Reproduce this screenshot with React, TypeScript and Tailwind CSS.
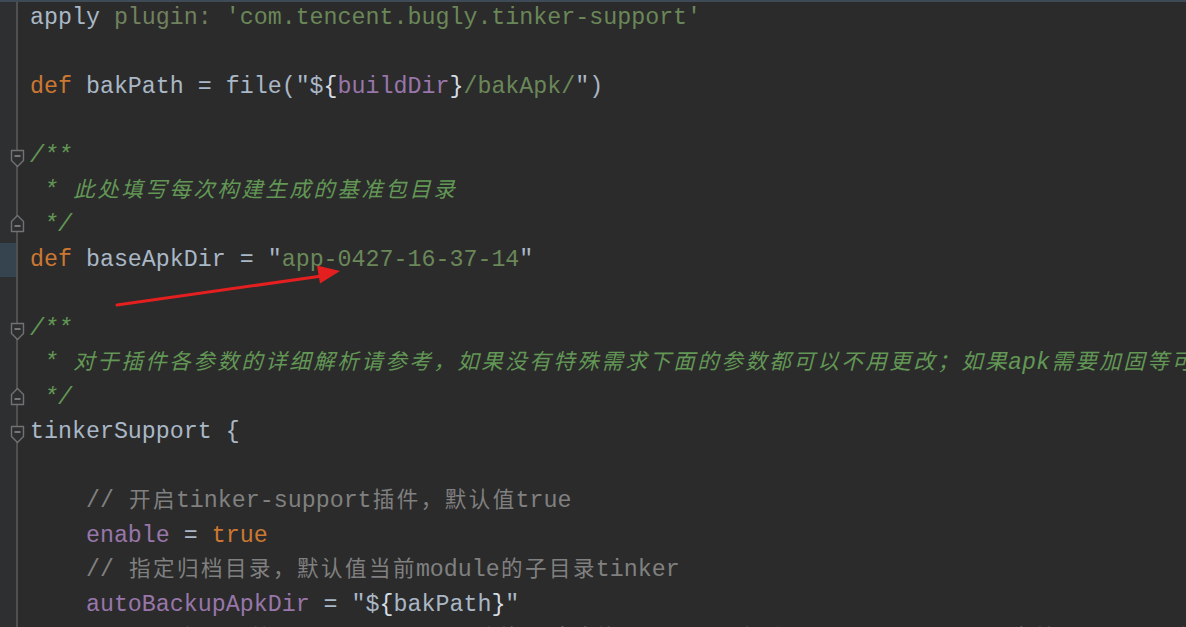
import React from "react";

type Seg = [string, string];

const D = "text-[#a9b7c6]";
const K = "text-[#cc7832]";
const S = "text-[#6a8759]";
const C = "text-[#808080]";
const DOC = "text-[#629755] italic";
const P = "text-[#9876aa]";
const B = "text-[#d4dce4]";
const PL = "text-[#71815f]";

type Line = { segs: Seg[]; fold?: "start" | "end"; current?: boolean };

const lines: Line[] = [
  { segs: [["apply ", D], ["plugin: ", PL], ["'com.tencent.bugly.tinker-support'", S]] },
  { segs: [] },
  {
    segs: [
      ["def", K],
      [" bakPath = file(\"$", D],
      ["{", B],
      ["buildDir", P],
      ["}", B],
      ["/bakApk/", S],
      ["\")", D],
    ],
  },
  { segs: [] },
  { segs: [["/**", DOC]], fold: "start" },
  { segs: [[" * 此处填写每次构建生成的基准包目录", DOC]] },
  { segs: [[" */", DOC]], fold: "end" },
  {
    segs: [
      ["def", K],
      [" baseApkDir = \"", D],
      ["app-0427-16-37-14", S],
      ["\"", D],
    ],
    current: true,
  },
  { segs: [] },
  { segs: [["/**", DOC]], fold: "start" },
  {
    segs: [
      [
        " * 对于插件各参数的详细解析请参考，如果没有特殊需求下面的参数都可以不用更改；如果apk需要加固等可以参考具体描述设置参数",
        DOC,
      ],
    ],
  },
  { segs: [[" */", DOC]], fold: "end" },
  { segs: [["tinkerSupport {", D]], fold: "start" },
  { segs: [] },
  { segs: [["    // 开启tinker-support插件，默认值true", C]] },
  { segs: [["    ", D], ["enable", P], [" = ", D], ["true", K]] },
  { segs: [["    // 指定归档目录，默认值当前module的子目录tinker", C]] },
  {
    segs: [
      ["    ", D],
      ["autoBackupApkDir", P],
      [" = \"$", D],
      ["{", B],
      ["bakPath", D],
      ["}", B],
      ["\"", D],
    ],
  },
  { segs: [["    // 是否启用覆盖tinkerPatch配置功能，默认值false，开启后tinkerPatch配置不生效，即无需添加", C]] },
];

const CJK = /([\u3000-\u303f\u3400-\u9fff\uff00-\uffef]+)/;

function renderText(text: string, key: string) {
  const parts = text.split(CJK);
  return parts.map((p, i) => {
    if (i % 2 === 1) {
      return Array.from(p).map((ch, j) => (
        <span
          key={`${key}-${i}-${j}`}
          className="inline-block w-[24px] text-center text-[21.5px]"
        >
          {ch}
        </span>
      ));
    }
    return p ? <span key={`${key}-${i}`}>{p}</span> : null;
  });
}

function FoldMarker({ kind }: { kind: "start" | "end" }) {
  if (kind === "start") {
    return (
      <svg
        className="absolute left-[10px] top-[10px]"
        width="15"
        height="19"
        viewBox="0 0 15 19"
      >
        <path
          d="M1.5 1.5 H13.5 V11.5 L7.5 17.5 L1.5 11.5 Z"
          fill="#2d2e30"
          stroke="#727272"
          strokeWidth="1.4"
          strokeLinejoin="round"
        />
        <path d="M4.5 7 H10.5" stroke="#8a8a8a" strokeWidth="1.6" />
      </svg>
    );
  }
  return (
    <svg
      className="absolute left-[10px] top-[6px]"
      width="15"
      height="19"
      viewBox="0 0 15 19"
    >
      <path
        d="M1.5 17.5 H13.5 V7.5 L7.5 1.5 L1.5 7.5 Z"
        fill="#2d2e30"
        stroke="#727272"
        strokeWidth="1.4"
        strokeLinejoin="round"
      />
      <path d="M4.5 12 H10.5" stroke="#8a8a8a" strokeWidth="1.6" />
    </svg>
  );
}

export default function App() {
  return (
    <div className="relative h-[627px] w-[1186px] overflow-hidden bg-[#2b2b2b] font-['Liberation_Mono','Noto_Sans_CJK_SC',monospace] text-[23.3px] leading-[34.5px]">
      <div className="flex flex-col pt-[1px]">
        {lines.map((ln, i) => (
          <div key={i} className="flex h-[34.5px] shrink-0">
            <div className="relative flex w-[30px] shrink-0">
              <div
                className={
                  ln.current
                    ? "h-full w-[16px] bg-[#35444f]"
                    : "h-full w-[16px] bg-[#2e2f31]"
                }
              />
              <div className="h-full w-[2px] bg-[#4e5052]" />
              {ln.fold ? <FoldMarker kind={ln.fold} /> : null}
            </div>
            <div className="whitespace-pre">
              {ln.segs.map((s, j) => (
                <span key={j} className={s[1]}>
                  {renderText(s[0], `${i}-${j}`)}
                </span>
              ))}
            </div>
          </div>
        ))}
      </div>
      <div className="absolute left-0 top-0 h-[2px] w-full bg-[#3e4a55]" />
      <svg
        className="pointer-events-none absolute left-0 top-0"
        width="1186"
        height="627"
        viewBox="0 0 1186 627"
      >
        <line
          x1="117"
          y1="305"
          x2="322"
          y2="276"
          stroke="#e3201f"
          strokeWidth="3"
          strokeLinecap="round"
        />
        <polygon points="340,271 317,265.5 320,283.5" fill="#e3201f" />
      </svg>
    </div>
  );
}
